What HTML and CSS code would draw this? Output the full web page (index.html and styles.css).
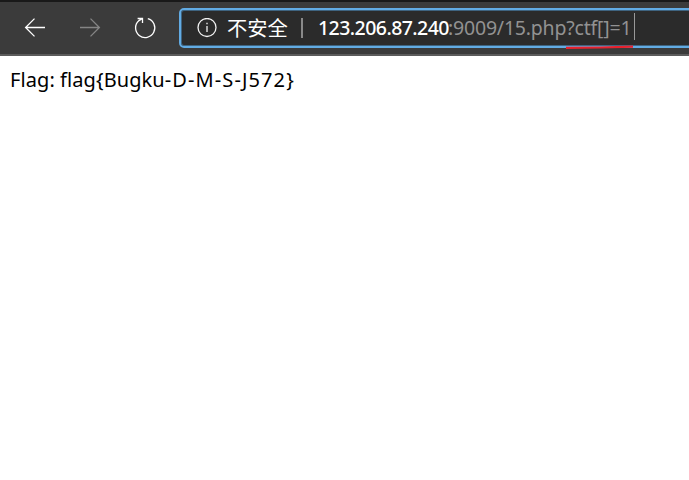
FILE: index.html
```html
<!DOCTYPE html>
<html lang="zh-CN">
<head>
<meta charset="utf-8">
<title>15.php</title>
<link rel="stylesheet" href="styles.css">
</head>
<body>
<header class="toolbar">
  <nav class="nav">
    <svg class="icon" viewBox="0 0 24 24"><path d="M22 12.5H3M11.5 3.6L2.6 12.5l8.9 8.9"/></svg>
    <svg class="icon disabled" viewBox="0 0 24 24"><path d="M2 12.5h19M12.5 3.6l8.9 8.9-8.9 8.9"/></svg>
    <svg class="icon" viewBox="0 0 24 24"><path d="M14.8 3.7A9.6 9.6 0 1 1 6 5.6L9 3.7M4.6 3.5h4.9v4.6"/></svg>
  </nav>
  <div class="address">
    <svg class="info" viewBox="0 0 20 20"><circle cx="10" cy="9.5" r="9"/><path d="M10 8v6M10 4.7v1.6"/></svg>
    <span class="warning">不安全</span>
    <span class="divider"></span>
    <span class="host">123.206.87.240</span><span class="path">:9009/15.php?ctf[]=1</span>
    <span class="caret"></span>
    <svg class="underline" viewBox="0 0 70 6"><path d="M1 3.8L35 3.5 68 2.6"/></svg>
  </div>
</header>
<main class="content"><span class="flag">Flag: flag{Bugku<span class="code">-D-M-S-J572}</span></span></main>
</body>
</html>
```
FILE: styles.css
```css
* { box-sizing: border-box; }
body {
  margin: 0;
  background: #fff;
  overflow: hidden;
  font-family: "Noto Sans", "Noto Sans CJK SC", sans-serif;
}
.toolbar {
  height: 56px;
  display: flex;
  align-items: flex-start;
  background: #3b3b3b;
  border-top: 2px solid #191919;
  border-bottom: 2px solid #5b5b5b;
}
.nav {
  width: 179px;
  flex: none;
  display: flex;
  gap: 31px;
  padding: 13px 0 0 23px;
}
.icon {
  width: 24px;
  height: 24px;
  flex: none;
  fill: none;
  stroke: #fff;
  stroke-width: 1.3;
}
.disabled { stroke: #858585; }
.address {
  position: relative;
  width: 530px;
  height: 40px;
  margin-top: 6px;
  flex: none;
  display: flex;
  align-items: center;
  padding-left: 16px;
  background: #2b2b2b;
  border: 2px solid #62abe3;
  border-radius: 5px;
  box-shadow: inset 0 0 0 1px #3f6480;
  font-size: 19.5px;
  line-height: 32px;
  white-space: nowrap;
}
.info {
  width: 20px;
  height: 20px;
  flex: none;
  fill: none;
  stroke: #f2f2f2;
  stroke-width: 1.3;
}
.warning {
  width: 61px;
  margin: -2px 0 0 10px;
  font-family: "Noto Sans CJK SC", sans-serif;
  font-size: 20.3px;
  color: #fff;
}
.divider {
  width: 2px;
  height: 20px;
  margin: 0 15px 0 13px;
  background: #898989;
}
.host {
  width: 130px;
  color: #fff;
  font-weight: 500;
  letter-spacing: -0.55px;
}
.path {
  width: 186px;
  color: #929292;
  letter-spacing: -0.2px;
}
.caret {
  width: 1px;
  height: 27px;
  margin-top: -3px;
  background: #999;
}
.underline {
  position: absolute;
  left: 384px;
  bottom: -4px;
  width: 70px;
  height: 6px;
  fill: none;
  stroke: #e9212d;
  stroke-width: 2.2;
}
.content { padding: 10px; }
.flag {
  display: block;
  font-size: 20px;
  line-height: 28px;
  letter-spacing: 0.08px;
  color: #000;
}
.code { letter-spacing: 1.1px; }
```
